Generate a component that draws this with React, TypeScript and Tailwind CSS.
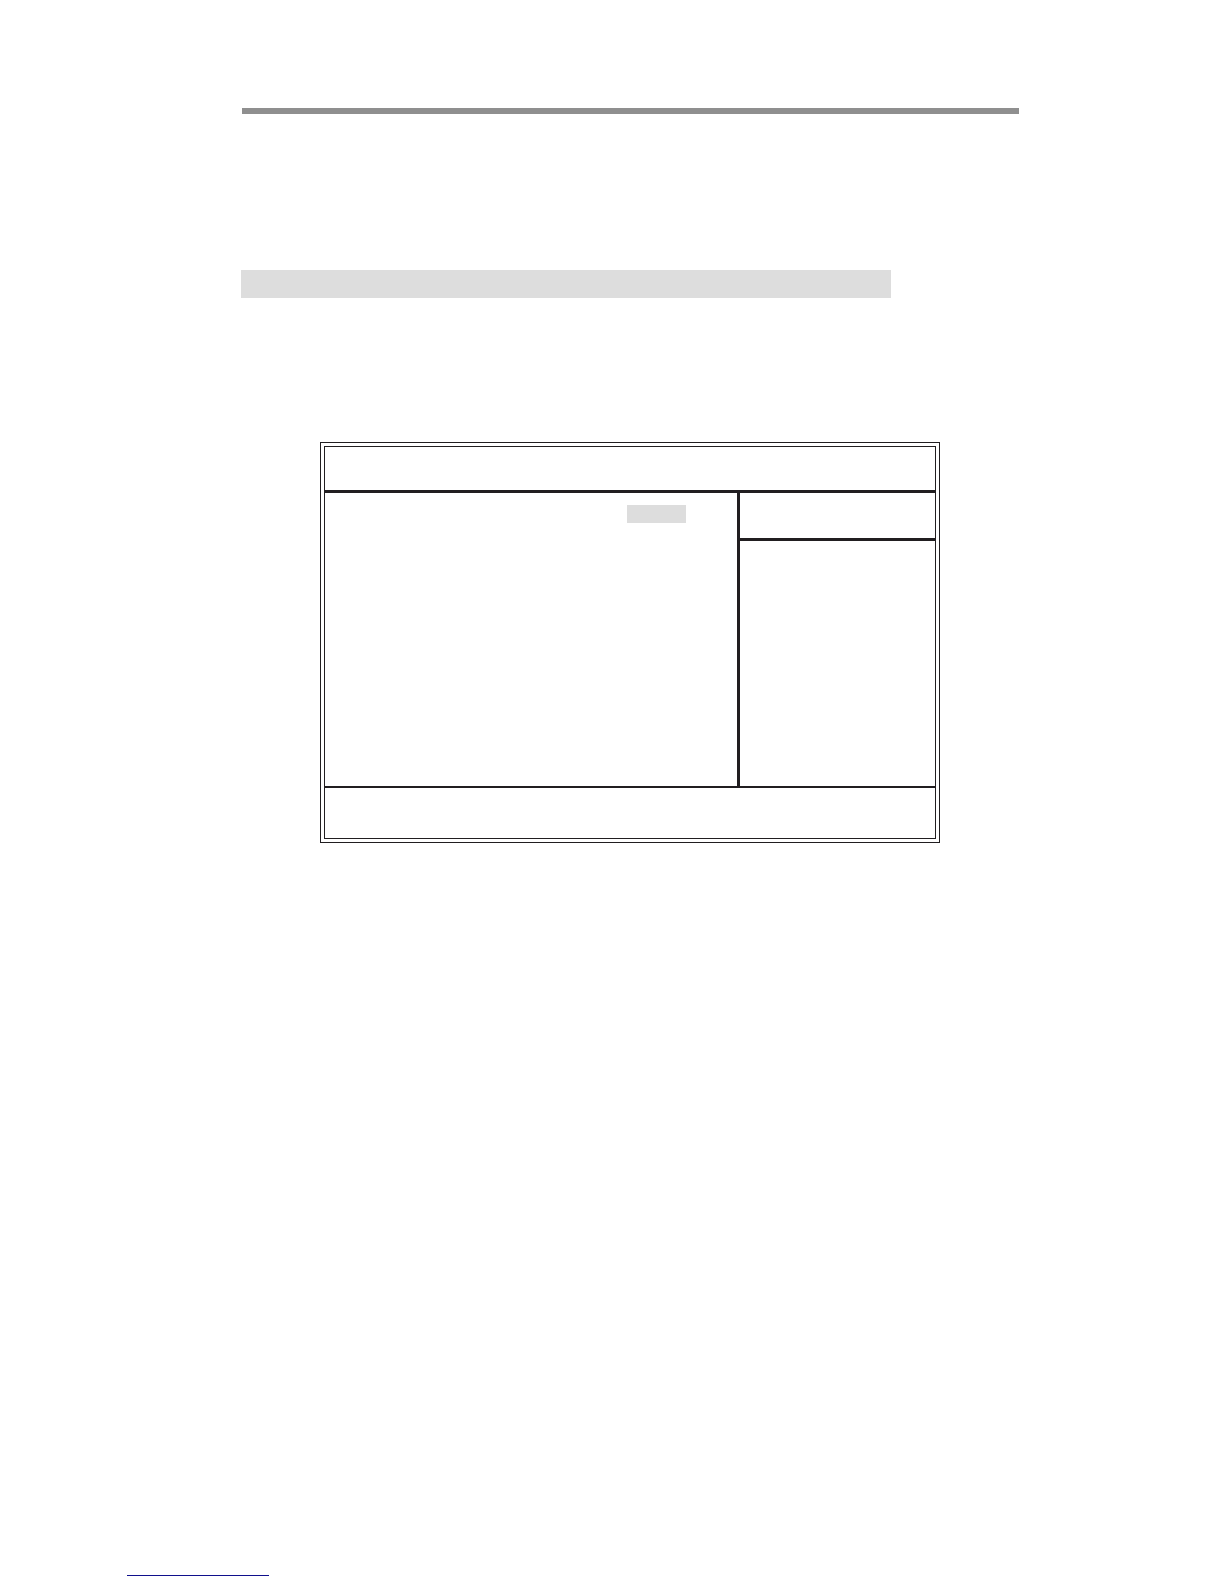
export default function App() {
  return (
    <div className="bg-white pt-[108px] pb-2">
      <main className="pl-[241px] pr-[205px]">
        {/* Page header rule */}
        <header className="ml-px h-1.5 bg-[#8f8f8f]" />

        {/* Section title band */}
        <div className="mt-[156px] mr-32 h-7 bg-[#dddddd]" />

        {/* Setup screen with a double frame */}
        <section className="mt-36 mr-[79px] ml-[79px] border border-[#211e20] p-[3px]">
          <div className="border border-[#211e20]">
            <div className="h-[46px] border-b-3 border-[#211e20]" />

            <div className="flex min-h-[295px] border-b-2 border-[#211e20]">
              {/* Selected value */}
              <div className="flex flex-1 justify-end pt-3 pr-[51px]">
                <div className="h-[18px] w-[59px] bg-[#dddddd]" />
              </div>

              {/* Help panel */}
              <aside className="w-[198px] border-l-3 border-[#211e20]">
                <div className="h-12 border-b-3 border-[#211e20]" />
              </aside>
            </div>

            <div className="h-[50px]" />
          </div>
        </section>
      </main>

      {/* Footer underline */}
      <footer className="mt-[732px] pl-[127px]">
        <div className="h-px w-[142px] bg-[#10108c]" />
      </footer>
    </div>
  );
}
